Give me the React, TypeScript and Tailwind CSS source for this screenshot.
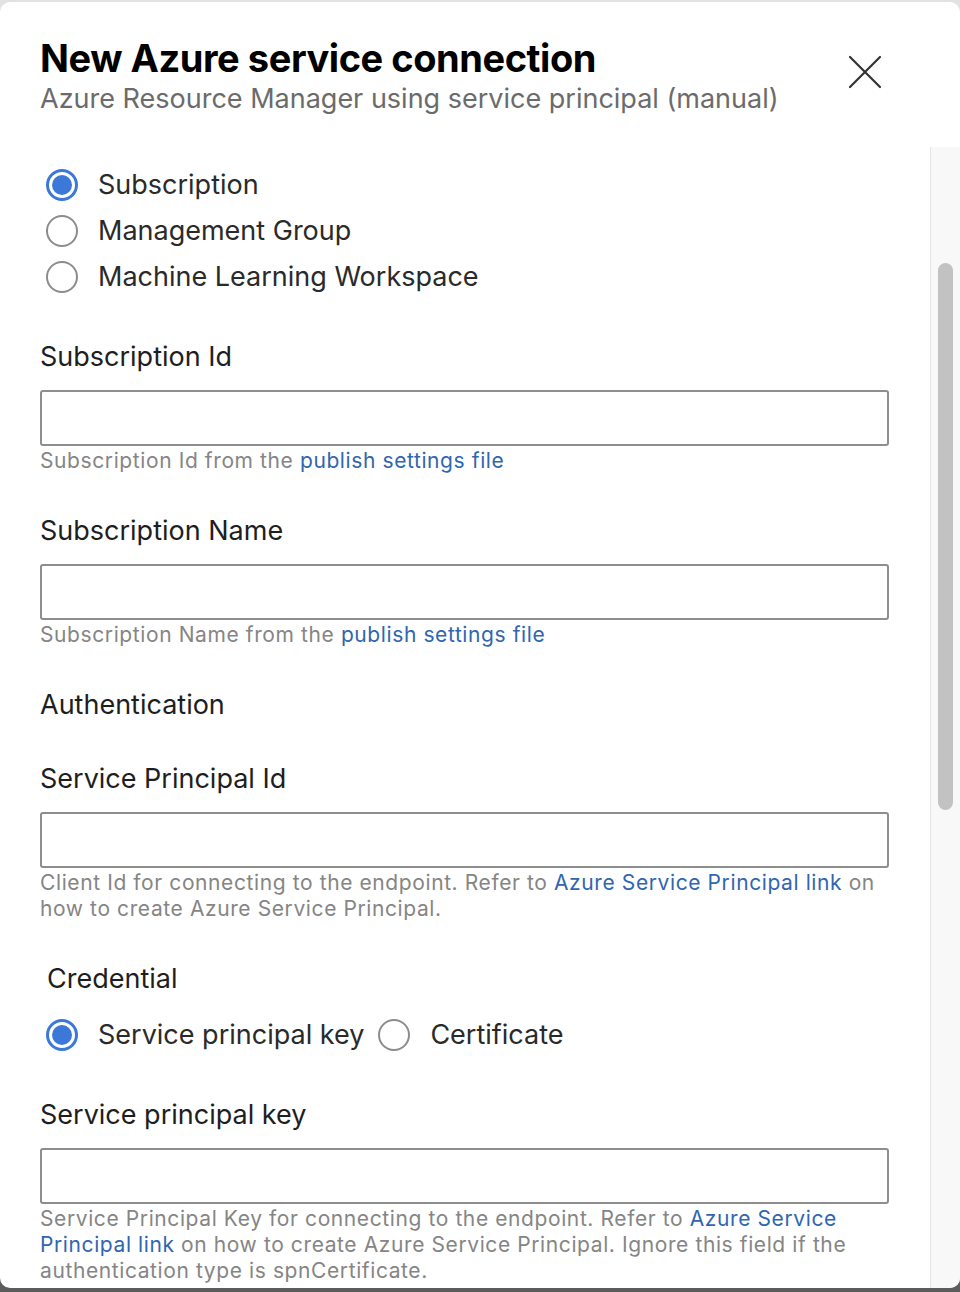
import React from "react";

const Radio = ({ checked }: { checked?: boolean }) =>
  checked ? (
    <div className="w-[32px] h-[32px] rounded-full border-[3px] border-[#3b78d8] bg-white flex items-center justify-center shrink-0">
      <div className="w-[20px] h-[20px] rounded-full bg-[#3b78d8]" />
    </div>
  ) : (
    <div className="w-[32px] h-[32px] rounded-full border-[2px] border-[#8c8c8c] bg-white shrink-0" />
  );

const Link = ({ children }: { children: React.ReactNode }) => (
  <span className="text-[#2f66b0]">{children}</span>
);

const Label = ({ children, className = "" }: { children: React.ReactNode; className?: string }) => (
  <div className={"text-[27px] leading-[34px] text-[#1e1e1e] " + className}>{children}</div>
);

const Input = () => (
  <div className="mt-[16px] h-[56px] w-[849px] rounded-[3px] border-2 border-[#8e8e8e] bg-white" />
);

const Help = ({ children }: { children: React.ReactNode }) => (
  <div className="mt-[2px] w-[849px] text-[21px] leading-[26px] text-[#858585] tracking-[0.6px]">{children}</div>
);

export default function App() {
  return (
    <div
      className="h-[1292px] w-[960px] overflow-hidden bg-[linear-gradient(to_bottom,#e2e2e2_50%,#5c5c5c_50%)] pt-[2px] pb-[4px] flex flex-col"
      style={{ fontFamily: "Inter, 'Noto Sans', sans-serif" }}
    >
      <div className="flex-1 flex flex-col bg-white rounded-[10px] overflow-hidden">
        {/* header */}
        <div className="h-[145px] shrink-0 flex pl-[40px] pt-[33px] pr-[78px]">
          <div className="flex-1">
            <div className="text-[38px] leading-[46px] font-bold text-black tracking-[-0.45px]">
              New Azure service connection
            </div>
            <div className="text-[27px] leading-[34px] text-[#6b6b6b] mt-[1px]">
              Azure Resource Manager using service principal (manual)
            </div>
          </div>
          <div className="pt-[20px]">
            <svg width="34" height="34" viewBox="0 0 34 34" fill="none" stroke="#333" strokeWidth="2.2" strokeLinecap="round">
              <path d="M2 2 L32 32 M32 2 L2 32" />
            </svg>
          </div>
        </div>
        {/* body */}
        <div className="flex-1 flex min-h-0">
          <div className="flex-1 pl-[40px] pt-[15px] overflow-hidden">
            <div className="flex flex-col">
              {["Subscription", "Management Group", "Machine Learning Workspace"].map((t, i) => (
                <div key={t} className="h-[46px] flex items-center pl-[6px] gap-[20px]">
                  <Radio checked={i === 0} />
                  <span className="text-[27px] text-[#2a2a2a]">{t}</span>
                </div>
              ))}
            </div>

            <Label className="mt-[40px]">Subscription Id</Label>
            <Input />
            <Help>
              Subscription Id from the <Link>publish settings file</Link>
            </Help>

            <Label className="mt-[40px]">Subscription Name</Label>
            <Input />
            <Help>
              Subscription Name from the <Link>publish settings file</Link>
            </Help>

            <Label className="mt-[40px]">Authentication</Label>

            <Label className="mt-[40px]">Service Principal Id</Label>
            <Input />
            <Help>
              Client Id for connecting to the endpoint. Refer to <Link>Azure Service Principal link</Link> on how to create Azure Service Principal.
            </Help>

            <Label className="mt-[40px] ml-[7px]">Credential</Label>

            <div className="mt-[22px] h-[34px] flex items-center pl-[6px]">
              <Radio checked />
              <span className="ml-[20px] text-[27px] text-[#2a2a2a]">Service principal key</span>
              <div className="ml-[14px]">
                <Radio />
              </div>
              <span className="ml-[20px] text-[27px] text-[#2a2a2a]">Certificate</span>
            </div>

            <Label className="mt-[46px]">Service principal key</Label>
            <Input />
            <Help>
              Service Principal Key for connecting to the endpoint. Refer to <Link>Azure Service Principal link</Link> on how to create Azure Service Principal. Ignore this field if the authentication type is spnCertificate.
            </Help>
          </div>
          {/* scrollbar */}
          <div className="w-[30px] shrink-0 bg-[#f8f8f8] border-l border-[#e6e6e6] pt-[116px] pl-[7px]">
            <div className="w-[15px] h-[547px] rounded-full bg-[#c2c2c2]" />
          </div>
        </div>
      </div>
    </div>
  );
}
